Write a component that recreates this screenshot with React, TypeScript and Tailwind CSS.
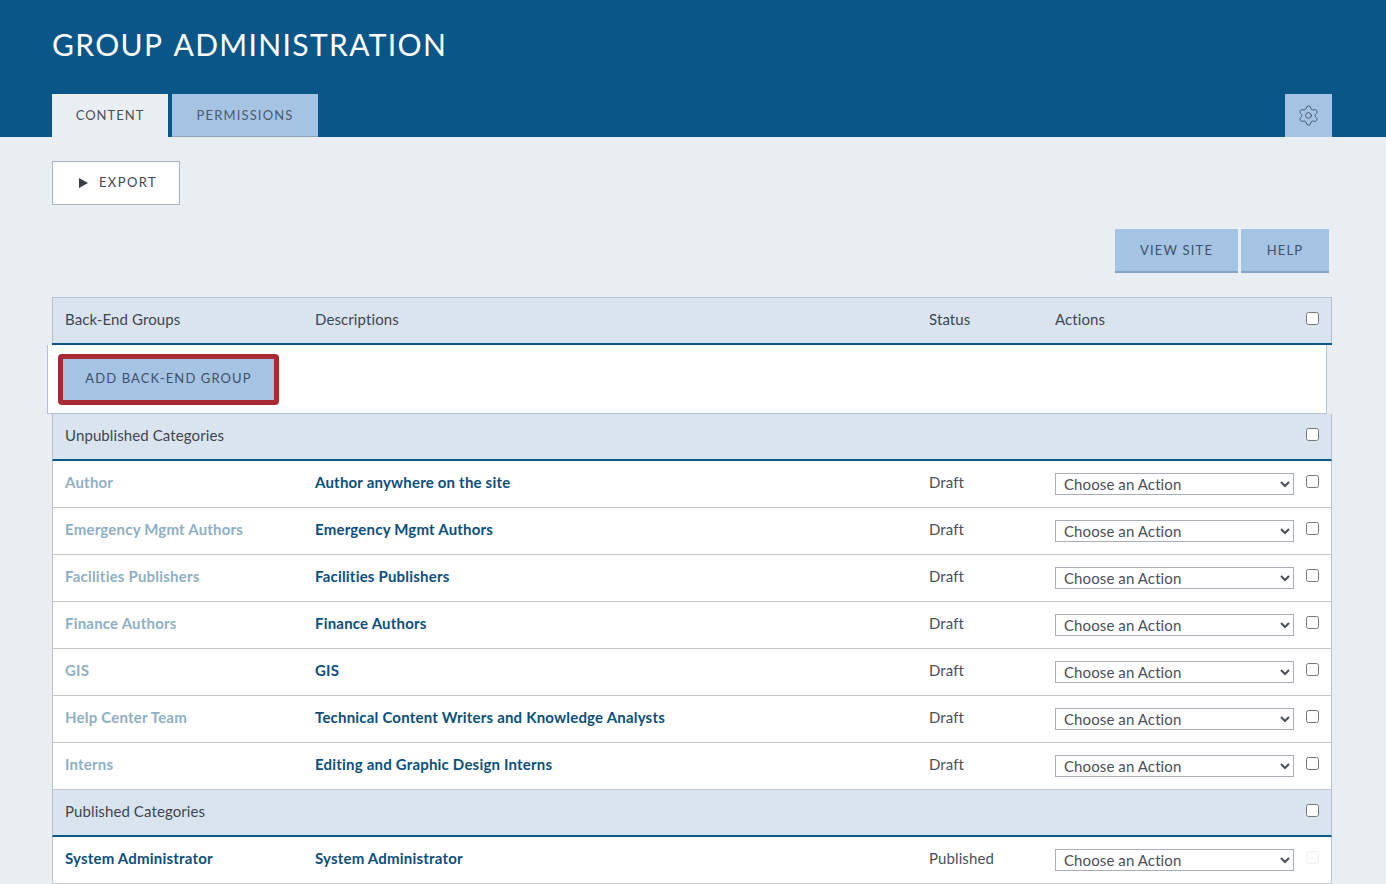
import { Settings } from 'lucide-react';

const font = "font-['Lato','Noto_Sans',sans-serif]";

const unpublished = [
  { name: 'Author', description: 'Author anywhere on the site' },
  { name: 'Emergency Mgmt Authors', description: 'Emergency Mgmt Authors' },
  { name: 'Facilities Publishers', description: 'Facilities Publishers' },
  { name: 'Finance Authors', description: 'Finance Authors' },
  { name: 'GIS', description: 'GIS' },
  { name: 'Help Center Team', description: 'Technical Content Writers and Knowledge Analysts' },
  { name: 'Interns', description: 'Editing and Graphic Design Interns' },
];

const rowGrid = 'grid grid-cols-[250px_614px_126px_251px_1fr] pl-3';

const CategoryHeader = ({ label }: { label: string }) => (
  <div className="flex h-[47px] items-center justify-between border-x border-[#b4c1d3] border-b-2 border-b-[#0b5688] bg-[#dae4ef] pl-3 pr-[12px] text-[15px] tracking-[0.1px] text-[#3f4650]">
    <span className="-mt-[2px]">{label}</span>
    <input type="checkbox" className="-mt-[4px] h-[13px] w-[13px]" />
  </div>
);

const Row = ({ name, description, status, published }: { name: string; description: string; status: string; published?: boolean }) => (
  <div className={`${rowGrid} h-[47px] items-center border-x border-b border-[#b4c1d3] border-b-[#c4c8ce] bg-white text-[15px]`}>
    <span className={`-mt-[3px] font-bold tracking-[0.2px] ${published ? 'text-[#0b4f7e]' : 'text-[#8fafc6]'}`}>{name}</span>
    <span className="-mt-[3px] font-bold tracking-[0.2px] text-[#0b4f7e]">{description}</span>
    <span className="-mt-[3px] tracking-[0.1px] text-[#4b5058]">{status}</span>
    <select className="-mt-px h-[22px] w-[239px] border border-[#a9afb8] bg-white pl-[4px] text-[15px] tracking-[0.1px] text-[#4b5058]">
      <option>Choose an Action</option>
    </select>
    <input type="checkbox" disabled={published} className={`-mt-[5px] h-[13px] w-[13px] ${published ? 'opacity-30' : ''}`} />
  </div>
);

export default function App() {
  return (
    <div className={`${font} h-[884px] overflow-hidden bg-[#e9eef2] text-[#3f4650]`}>
      <header className="flex h-[137px] flex-col justify-between bg-[#0b5688] pl-[52px] pr-[54px]">
        <h1 className="pt-[25px] text-[30px] leading-[38px] tracking-[1.35px] [word-spacing:3px] text-white">GROUP ADMINISTRATION</h1>
        <div className="flex items-end justify-between">
          <div className="flex gap-1">
            <div className="flex h-[43px] w-[116px] items-center justify-center bg-[#e9eef2] text-[13px] tracking-[1px] text-[#4b5058]">CONTENT</div>
            <div className="flex h-[43px] w-[146px] items-center justify-center border-b border-[#8fa5c0] bg-[#a5c3e2] pt-px text-[13px] tracking-[1.15px] text-[#4b5a6e]">PERMISSIONS</div>
          </div>
          <div className="flex h-[43px] w-[47px] items-center justify-center bg-[#a5c3e2] text-[#3f5870]">
            <Settings size={23} strokeWidth={1} />
          </div>
        </div>
      </header>

      <main className="pl-[52px] pr-[54px]">
        <div className="pt-6">
          <button className="flex h-[44px] w-[128px] items-center justify-center gap-[11px] border border-[#a9b2c0] bg-white pb-px pl-[4px] text-[13px] tracking-[1.4px] text-[#40454f]">
            <svg width="9" height="10" viewBox="0 0 9 10" className="mt-px">
              <polygon points="0,0 9,5 0,10" fill="#3a3f48" />
            </svg>
            EXPORT
          </button>
        </div>

        <div className="mt-6 flex justify-end gap-[3px] pr-[3px]">
          <button className="h-[44px] w-[123px] border-b-2 border-[#85a3c3] bg-[#a5c3e2] pt-[2px] text-[13px] tracking-[1.2px] text-[#40506a]">VIEW SITE</button>
          <button className="h-[44px] w-[88px] border-b-2 border-[#85a3c3] bg-[#a5c3e2] pt-[2px] text-[13px] tracking-[1.2px] text-[#40506a]">HELP</button>
        </div>

        <div className="mt-6">
          <div className={`${rowGrid} h-[46px] items-center border-x border-t border-[#b4c1d3] bg-[#dae4ef] text-[15px] tracking-[0.1px] text-[#3f4650]`}>
            <span className="-mt-[2px]">Back-End Groups</span>
            <span className="-mt-[2px]">Descriptions</span>
            <span className="-mt-[2px]">Status</span>
            <span className="-mt-[2px]">Actions</span>
            <input type="checkbox" className="-mt-[4px] h-[13px] w-[13px]" />
          </div>
          <div className="h-[2px] bg-[#0b5688]" />
          <div className="-ml-[5px] mr-[5px] h-[69px] border-x border-b border-[#b4c1d3] bg-white pl-[10px] pt-[9px]">
            <button className="h-[51px] w-[221px] rounded-[4px] border-[5px] border-[#a82a33] bg-[#a5c3e2] pb-px text-[13px] tracking-[1.1px] text-[#40506a]">ADD BACK-END GROUP</button>
          </div>
          <CategoryHeader label="Unpublished Categories" />
          {unpublished.map((group) => (
            <Row key={group.name} name={group.name} description={group.description} status="Draft" />
          ))}
          <CategoryHeader label="Published Categories" />
          <Row name="System Administrator" description="System Administrator" status="Published" published />
        </div>
      </main>
    </div>
  );
}
